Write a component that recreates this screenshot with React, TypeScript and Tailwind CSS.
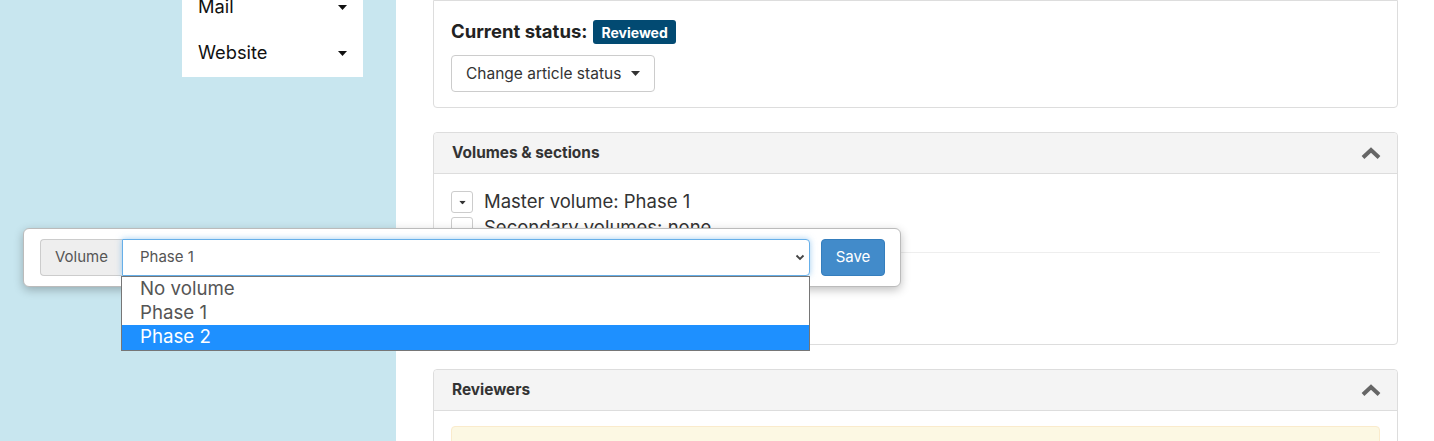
import React from "react";

function Caret({ className = "" }: { className?: string }) {
  return (
    <svg width="9" height="5" viewBox="0 0 9 5" className={className}>
      <path d="M0 0h9L4.5 5z" fill="currentColor" />
    </svg>
  );
}

function ChevronUp() {
  return (
    <svg width="20" height="14" viewBox="0 0 20 14">
      <path d="M2 11.5 10 4l8 7.5" fill="none" stroke="#666" strokeWidth="4" />
    </svg>
  );
}

function Panel({ title, children, className = "" }: { title?: string; children: React.ReactNode; className?: string }) {
  return (
    <div className={"shrink-0 border border-[#ddd] rounded-[4px] bg-white " + className}>
      {title && (
        <div className="h-[41px] bg-[#f4f4f4] border-b border-[#ddd] rounded-t-[4px] flex items-center justify-between pl-[18px] pr-[16px]">
          <span className="text-[15.4px] font-bold text-[#333]">{title}</span>
          <ChevronUp />
        </div>
      )}
      {children}
    </div>
  );
}

export default function App() {
  return (
    <div className="relative w-[1434px] h-[441px] overflow-hidden flex font-['Inter','Noto_Sans',sans-serif] text-[#333]">
      <aside className="w-[396px] shrink-0 bg-[#c8e6ef] pl-[182px]">
        <ul className="w-[181px] bg-white -mt-[16px] pb-[1px] text-[18.3px] text-[#111]">
          <li className="h-[46px] flex items-center justify-between pl-[16px] pr-[16px]">
            Mail <Caret className="text-[#111]" />
          </li>
          <li className="h-[46px] flex items-center justify-between pl-[16px] pr-[16px]">
            Website <Caret className="text-[#111]" />
          </li>
        </ul>
      </aside>

      <main className="flex-1 pl-[37px] pr-[36px] flex flex-col gap-[24px]">
        <Panel className="h-[108px] pt-[19px] px-[17px] rounded-t-none border-t">
          <div className="flex items-center gap-[6px] h-[24px]">
            <span className="text-[18.5px] font-bold text-[#222]">Current status:</span>
            <span className="h-[24px] px-[8px] rounded-[3px] bg-[#024a72] text-white text-[14px] font-bold flex items-center">Reviewed</span>
          </div>
          <button className="mt-[11px] h-[37px] px-[14px] border border-[#ccc] rounded-[4px] bg-white text-[15.5px] text-[#333] flex items-center gap-[10px]">
            Change article status <Caret className="text-[#333]" />
          </button>
        </Panel>

        <Panel title="Volumes & sections" className="h-[213px]">
          <div className="px-[17px] pt-[16px]">
            <div className="flex items-center gap-[11px] h-[24px]">
              <span className="w-[22px] h-[22px] border border-[#ccc] rounded-[3px] flex items-center justify-center">
                <Caret className="text-[#333] scale-75" />
              </span>
              <span className="text-[18.5px]">Master volume: Phase 1</span>
            </div>
            <div className="flex items-center gap-[11px] h-[24px] mt-[2px]">
              <span className="w-[22px] h-[22px] border border-[#ccc] rounded-[3px]" />
              <span className="text-[18.5px]">Secondary volumes: none</span>
            </div>
            <hr className="mt-[12px] border-[#eee]" />
          </div>
        </Panel>

        <Panel title="Reviewers" className="h-[120px]">
          <div className="px-[17px] pt-[15px]">
            <div className="h-[60px] bg-[#fcf8e3] border border-[#faebcc] rounded-[4px] px-[18px] pt-[12px] text-[15px] text-[#8a6d3b]">
              An additional action must occur
            </div>
          </div>
        </Panel>
      </main>

      <div className="absolute left-[23px] top-[228px] w-[878px] h-[59px] bg-white border border-[#bbb] rounded-[6px] shadow-[0_3px_10px_rgba(0,0,0,0.25)] pt-[10px] pl-[16px] flex items-start">
        <div className="flex h-[37px]">
          <span className="w-[82px] bg-[#eee] border border-[#ccc] border-r-0 rounded-l-[4px] flex items-center justify-center text-[15px] text-[#555]">Volume</span>
          <div className="w-[688px] border border-[#66afe9] shadow-[0_0_6px_rgba(102,175,233,0.6)] rounded-r-[4px] flex items-center justify-between pl-[17px] pr-[4px] text-[15px] text-[#555] bg-white">
            Phase 1
            <svg width="10" height="7" viewBox="0 0 10 7">
              <path d="M1.5 1.5 5 5l3.5-3.5" fill="none" stroke="#444" strokeWidth="1.8" />
            </svg>
          </div>
        </div>
        <button className="ml-[11px] w-[64px] h-[37px] bg-[#428bca] border border-[#357ebd] rounded-[4px] text-white text-[15px]">Save</button>
      </div>

      <ul className="absolute left-[121px] top-[276px] w-[689px] border border-[#767676] bg-white text-[18.7px] text-[#555] leading-[24px]">
        <li className="pl-[18px] h-[24px]">No volume</li>
        <li className="pl-[18px] h-[24px]">Phase 1</li>
        <li className="pl-[18px] h-[25px] bg-[#1e90ff] text-white">Phase 2</li>
      </ul>
    </div>
  );
}
